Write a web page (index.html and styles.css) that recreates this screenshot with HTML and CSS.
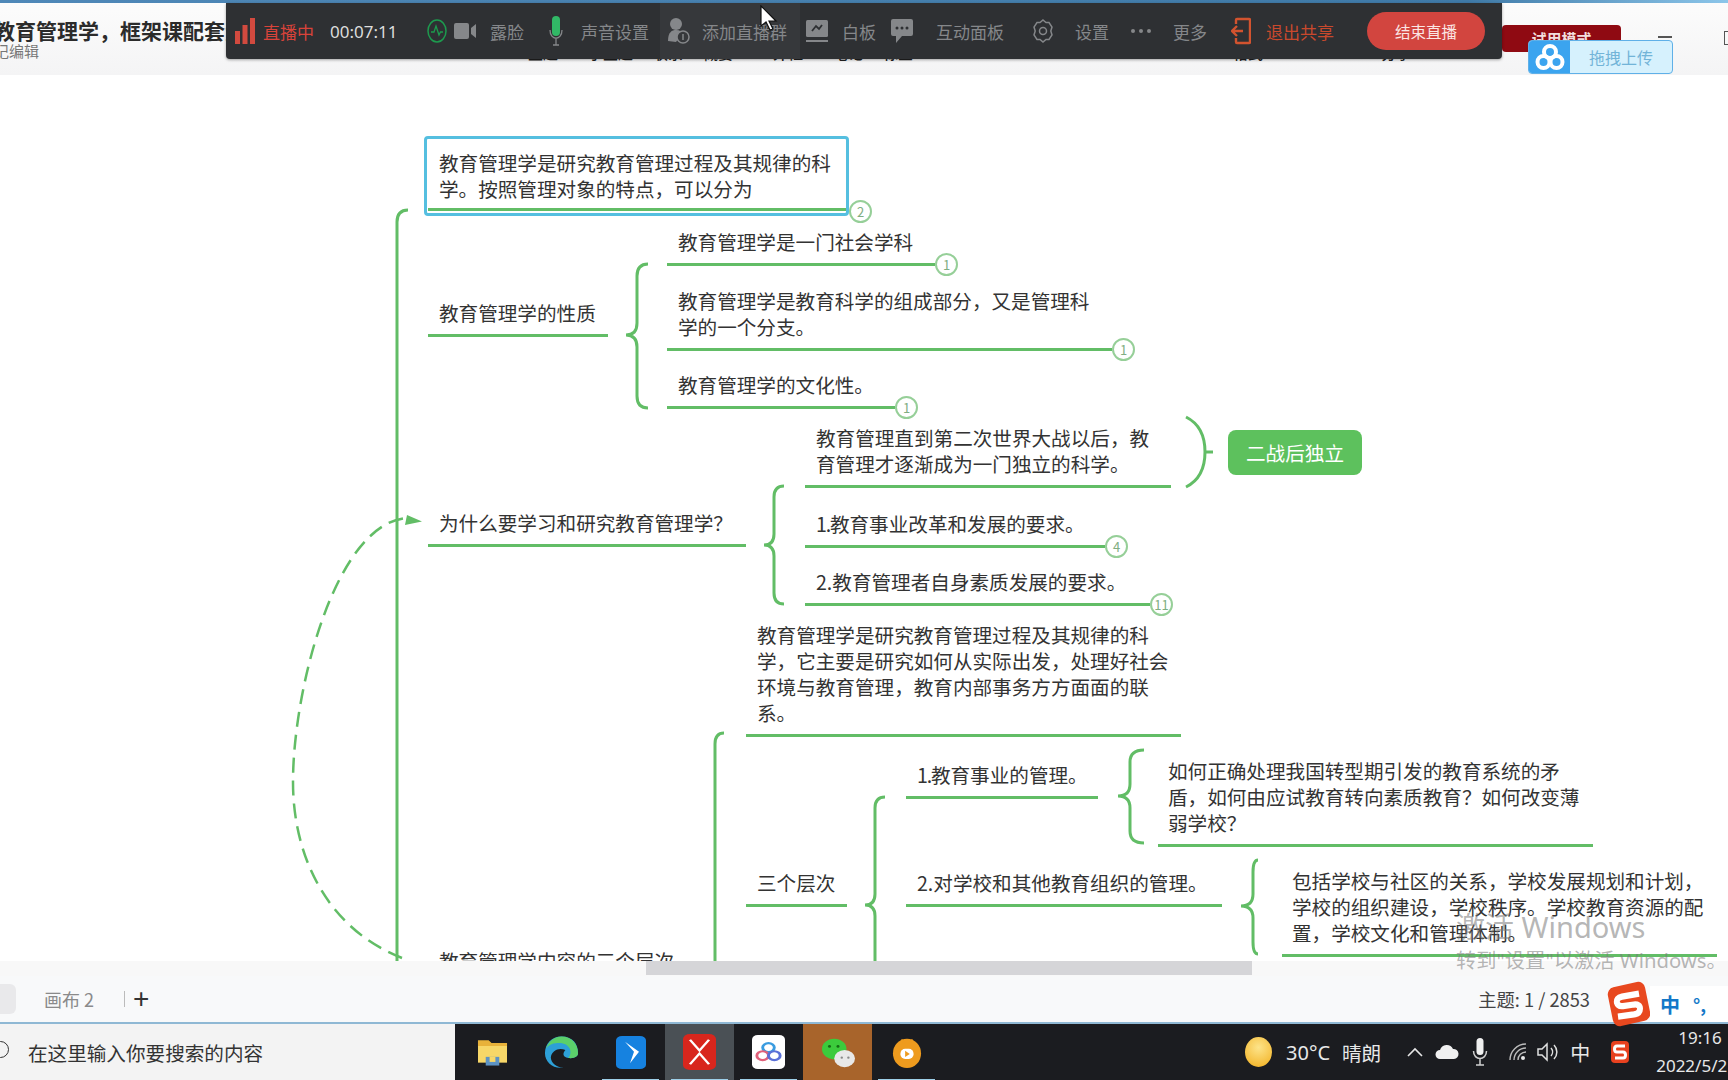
FILE: index.html
```html
<!DOCTYPE html>
<html lang="zh-CN">
<head>
<meta charset="utf-8">
<title>教育管理学</title>
<link rel="stylesheet" href="styles.css">
</head>
<body>
<div class="page">
  <header class="header">
    <div class="title-block">
      <div class="doc-title">教育管理学，框架课配套资料</div>
      <div class="doc-sub">记编辑</div>
    </div>
    <div class="menu-row">
      <span class="m1">主题</span><span class="m2">子主题</span><span class="m3">联系</span><span class="m4">概要</span><span class="m5">外框</span><span class="m6">笔记</span><span class="m7">标签</span><span class="m8">格式</span><span class="m9">分享</span>
    </div>
    <div class="trial">试用模式</div>
    <div class="win-min"></div>
    <div class="win-max"></div>
  </header>

  <main class="canvas">
    <svg class="links" viewBox="0 75 1728 886" width="1728" height="886" aria-hidden="true">
      <g class="link">
        <path d="M408 210Q397 210 397 222V961"/>
        <path d="M648 264Q637 264 637 276V323Q637 335 626 335Q637 335 637 347V396Q637 408 648 408"/>
        <path d="M784 486Q774 486 774 497V534Q774 545 764 545Q774 545 774 556V593Q774 604 784 604"/>
        <path d="M1186 417C1200 424 1205 438 1205 452C1205 466 1200 480 1186 487M1205 452H1213"/>
        <path d="M724 733Q715 733 715 744V961"/>
        <path d="M885 797Q875 797 875 808V894Q875 905 865 905Q875 905 875 916V961"/>
        <path d="M1144 750Q1130 750 1130 762V784Q1130 796 1118 796Q1130 796 1130 808V831Q1130 843 1144 843"/>
        <path d="M1258 860Q1253 860 1253 872V894Q1253 906 1241 906Q1253 906 1253 918V942Q1253 954 1258 954"/>
        <path class="dash" d="M402 958C330 930 293 860 293 782C293 690 335 525 406 518"/>
      </g>
      <path class="arrow" d="M407 515L422 521.500L405 525Z"/>
    </svg>

    <div class="selbox"></div>
    <div class="node a1">教育管理学是研究教育管理过程及其规律的科<br>学。按照管理对象的特点，可以分为<span class="badge">2</span></div>

    <div class="node b0">教育管理学的性质</div>
    <div class="node c1">教育管理学是一门社会学科<span class="badge">1</span></div>
    <div class="node c2">教育管理学是教育科学的组成部分，又是管理科<br>学的一个分支。<span class="badge">1</span></div>
    <div class="node c3">教育管理学的文化性。<span class="badge">1</span></div>

    <div class="node b1">为什么要学习和研究教育管理学？</div>
    <div class="node d1">教育管理直到第二次世界大战以后，教<br>育管理才逐渐成为一门独立的科学。</div>
    <div class="tag">二战后独立</div>
    <div class="node d2"><span class="one">1.</span>教育事业改革和发展的要求。<span class="badge">4</span></div>
    <div class="node d3">2.教育管理者自身素质发展的要求。<span class="badge">11</span></div>

    <div class="node b2">教育管理学内容的三个层次</div>
    <div class="node e1">教育管理学是研究教育管理过程及其规律的科<br>学，它主要是研究如何从实际出发，处理好社会<br>环境与教育管理，教育内部事务方方面面的联<br>系。</div>
    <div class="node e2">三个层次</div>
    <div class="node f1"><span class="one">1.</span>教育事业的管理。</div>
    <div class="node g1">如何正确处理我国转型期引发的教育系统的矛<br>盾，如何由应试教育转向素质教育？如何改变薄<br>弱学校？</div>
    <div class="node f2">2.对学校和其他教育组织的管理。</div>
    <div class="node g2">包括学校与社区的关系，学校发展规划和计划，<br>学校的组织建设，学校秩序。学校教育资源的配<br>置，学校文化和管理体制。</div>
  </main>

  <div class="hscroll"><div class="hthumb"></div></div>

  <footer class="statusbar">
    <div class="tab-active"></div>
    <div class="tab">画布 2</div>
    <div class="tab-sep"></div>
    <div class="tab-add">+</div>
    <div class="counter">主题: 1 / 2853</div>
  </footer>

  <div class="taskbar">
    <div class="search"><span class="search-ring"></span><span>在这里输入你要搜索的内容</span></div>
    <div class="tile"><svg width="31" height="29" viewBox="0 0 32 40" preserveAspectRatio="none"><path d="M1 3H12L15 7H31V12H1Z" fill="#e8b23a"/><path d="M1 11H31V34H1Z" fill="#f7d768"/><path d="M9 26H23V38H9Z" fill="#5d93c4"/><path d="M13 26H19V33H13Z" fill="#f7d768"/></svg></div>
    <div class="tile"><svg width="35" height="35" viewBox="0 0 36 44" preserveAspectRatio="none"><path d="M18 2C30 2 35 12 35 23C35 27 31 30 25 29C19 28 19 23 22 19C16 15 8 19 7 28C7 35 13 41 20 41C9 43 1 34 1 23C1 11 8 2 18 2Z" fill="#2da0d8"/><path d="M18 2C28 2 35 11 35 23C35 27 31 30 25 29C30 22 27 9 14 10C8 10 3 14 2 18C4 9 10 2 18 2Z" fill="#5bd06a"/></svg></div>
    <div class="tile tile-on"><svg width="30" height="33" viewBox="0 0 30 46" preserveAspectRatio="none"><rect width="30" height="46" rx="6" fill="#1682e0"/><path d="M9 8L23 22L14 38L18 22Z" fill="#fff"/></svg></div>
    <div class="tile tile-active tile-on"><svg width="33" height="36" viewBox="0 0 33 50" preserveAspectRatio="none"><rect width="33" height="50" rx="7" fill="#d8261d"/><path d="M7 8L16.500 23L26 8M7 42L16.500 27L26 42" fill="none" stroke="#fff" stroke-width="2.500"/></svg></div>
    <div class="tile tile-on"><svg width="33" height="34" viewBox="0 0 34 46" preserveAspectRatio="none"><rect width="34" height="46" rx="6" fill="#fff"/><circle cx="17" cy="17" r="6" fill="none" stroke="#3a9ce0" stroke-width="3"/><circle cx="11" cy="28" r="6" fill="none" stroke="#e0607a" stroke-width="3"/><circle cx="23" cy="28" r="6" fill="none" stroke="#5a70d8" stroke-width="3"/></svg></div>
    <div class="tile tile-wechat"><svg width="34" height="31" viewBox="0 0 36 36" preserveAspectRatio="none"><ellipse cx="14" cy="14" rx="13" ry="12" fill="#3ccb3c"/><ellipse cx="25" cy="25" rx="11" ry="10" fill="#e8e8e8"/><circle cx="9" cy="11" r="1.600" fill="#146c14"/><circle cx="18" cy="11" r="1.600" fill="#146c14"/><circle cx="22" cy="24" r="1.300" fill="#888"/><circle cx="29" cy="24" r="1.300" fill="#888"/></svg></div>
    <div class="tile tile-on"><svg width="30" height="33" viewBox="0 0 32 36" preserveAspectRatio="none"><ellipse cx="16" cy="19" rx="15" ry="16" fill="#ee9b1e"/><rect x="9" y="14" width="14" height="11" rx="5" fill="#fff"/><path d="M14 16L19 19.500L14 23Z" fill="#ee9b1e"/><path d="M10 4L14 8M22 4L18 8" stroke="#ee9b1e" stroke-width="2"/></svg></div>

    <div class="tray">
      <span class="sun"></span>
      <span class="temp">30°C</span>
      <span class="weather">晴朗</span>
      <svg class="t-caret" width="16" height="10" viewBox="0 0 16 10"><path d="M1 9L8 2L15 9" fill="none" stroke="#e6e6e6" stroke-width="1.600"/></svg>
      <svg class="t-cloud" width="24" height="16" viewBox="0 0 24 16"><path d="M5 15A4.500 4.500 0 0 1 5 6A7 7 0 0 1 18 5A5 5 0 0 1 19 15Z" fill="#f0f0f0"/></svg>
      <svg class="t-mic" width="16" height="30" viewBox="0 0 16 30"><rect x="4.500" y="1" width="7" height="17" rx="3.500" fill="#f0f0f0"/><path d="M1.500 14C1.500 24 14.500 24 14.500 14M8 22V28M4 28H12" fill="none" stroke="#d0d0d0" stroke-width="1.500"/></svg>
      <svg class="t-wifi" width="20" height="20" viewBox="0 0 20 20"><path d="M2 18A16 16 0 0 1 18 2M6 18A12 12 0 0 1 18 6M10 18A8 8 0 0 1 18 10" fill="none" stroke="#bcbcbc" stroke-width="1.400"/><circle cx="15" cy="16" r="2" fill="#e8e8e8"/></svg>
      <svg class="t-vol" width="24" height="22" viewBox="0 0 24 22"><path d="M2 8H6L11 3V19L6 14H2Z" fill="none" stroke="#e0e0e0" stroke-width="1.500"/><path d="M15 7A6 6 0 0 1 15 15M18 4A10 10 0 0 1 18 18" fill="none" stroke="#e0e0e0" stroke-width="1.500"/></svg>
      <span class="t-ime">中</span>
      <svg class="t-s" width="20" height="24" viewBox="0 0 20 24"><rect x="1" y="1" width="18" height="22" rx="4" fill="#e8411f"/><path d="M15 6H7Q4.500 6 4.500 9Q4.500 12 7 12H13Q15.500 12 15.500 15Q15.500 18 13 18H5" fill="none" stroke="#fff" stroke-width="3"/></svg>
      <div class="clock"><div class="clock-time">19:16</div><div class="clock-date">2022/5/2</div></div>
    </div>
  </div>

  <div class="top-stripe"></div>

  <div class="toolbar">
    <svg class="i-bars" width="20" height="26" viewBox="0 0 20 26"><rect x="0" y="13" width="5" height="13" fill="#d24a3f"/><rect x="7.500" y="7" width="5" height="19" fill="#d24a3f"/><rect x="15" y="0" width="5" height="26" fill="#d24a3f"/></svg>
    <span class="t-live">直播中</span>
    <span class="t-timer">00:07:11</span>
    <svg class="i-pulse" width="20" height="24" viewBox="0 0 20 24"><ellipse cx="10" cy="12" rx="9" ry="11" fill="none" stroke="#1d9a4e" stroke-width="1.500"/><path d="M4 13H7L9 7L12 16L13.500 13H16" fill="none" stroke="#1d9a4e" stroke-width="1.300"/></svg>
    <svg class="i-video" width="23" height="18" viewBox="0 0 23 18"><rect x="0" y="1" width="15" height="16" rx="2" fill="#85878a"/><path d="M17 6L22 2V16L17 12Z" fill="#85878a"/></svg>
    <span class="t-btn t-face">露脸</span>
    <svg class="i-mic" width="14" height="30" viewBox="0 0 14 30"><rect x="3" y="0" width="8" height="20" rx="4" fill="#31b866"/><path d="M1 14C1 25 13 25 13 14M7 23V29M4 29H10" fill="none" stroke="#85878a" stroke-width="1.300"/></svg>
    <span class="t-btn t-sound">声音设置</span>
    <div class="t-hover">
      <svg class="i-group" width="23" height="28" viewBox="0 0 23 28"><circle cx="9" cy="7" r="6" fill="#85878a"/><path d="M1 24C1 15 5 13 9 13C13 13 15 15 16 16L9 25Z" fill="#85878a"/><circle cx="16" cy="20" r="6" fill="#36383b" stroke="#85878a" stroke-width="1.500"/><path d="M16 17V23" stroke="#85878a" stroke-width="1.500"/></svg>
      <span class="t-btn t-add">添加直播群</span>
    </div>
    <svg class="i-board" width="22" height="24" viewBox="0 0 22 24"><rect x="0" y="1" width="22" height="17" rx="1.500" fill="#85878a"/><path d="M6 12L10 7L13 10L16 6" fill="none" stroke="#2e3033" stroke-width="1.800"/><rect x="0" y="21" width="22" height="2" fill="#85878a"/></svg>
    <span class="t-btn t-white">白板</span>
    <svg class="i-chat" width="22" height="26" viewBox="0 0 22 26"><path d="M2 1H20Q22 1 22 3V16Q22 18 20 18H11L5 25V18H2Q0 18 0 16V3Q0 1 2 1Z" fill="#85878a"/><circle cx="6" cy="10" r="1.500" fill="#2e3033"/><circle cx="11" cy="10" r="1.500" fill="#2e3033"/><circle cx="16" cy="10" r="1.500" fill="#2e3033"/></svg>
    <span class="t-btn t-panel">互动面板</span>
    <svg class="i-gear" width="22" height="24" viewBox="0 0 22 24"><path d="M11 1L14 3.500H17L20 8L18.800 12L20 16L17 20.500H14L11 23L8 20.500H5L2 16L3.200 12L2 8L5 3.500H8Z" fill="none" stroke="#85878a" stroke-width="1.500"/><circle cx="11" cy="12" r="3.500" fill="none" stroke="#85878a" stroke-width="1.500"/></svg>
    <span class="t-btn t-set">设置</span>
    <svg class="i-dots" width="22" height="6" viewBox="0 0 22 6"><circle cx="3" cy="3" r="2" fill="#85878a"/><circle cx="11" cy="3" r="2" fill="#85878a"/><circle cx="19" cy="3" r="2" fill="#85878a"/></svg>
    <span class="t-btn t-more">更多</span>
    <svg class="i-exit" width="20" height="28" viewBox="0 0 20 28"><path d="M5 7V3Q5 2 6 2H18Q19 2 19 3V25Q19 26 18 26H6Q5 26 5 25V21" fill="none" stroke="#d2532f" stroke-width="2.400"/><path d="M1 14H12M6 9L1 14L6 19" fill="none" stroke="#d2532f" stroke-width="2.400"/></svg>
    <span class="t-exit">退出共享</span>
    <div class="t-end">结束直播</div>
  </div>

  <svg class="cursor" width="18" height="26" viewBox="0 0 18 26"><path d="M1 1V21L6 17L10 25L13 24L9 16L16 16Z" fill="#fff" stroke="#111" stroke-width="1.200"/></svg>

  <div class="upload">
    <div class="upload-ico"><svg width="30" height="28" viewBox="0 0 30 28"><circle cx="15" cy="9" r="6" fill="none" stroke="#fff" stroke-width="4"/><circle cx="8.500" cy="19" r="6" fill="none" stroke="#fff" stroke-width="4"/><circle cx="21.500" cy="19" r="6" fill="none" stroke="#fff" stroke-width="4"/></svg></div>
    <div class="upload-txt">拖拽上传</div>
  </div>

  <div class="watermark">
    <div class="wm-1">激活 Windows</div>
    <div class="wm-2">转到"设置"以激活 Windows。</div>
  </div>

  <div class="ime">
    <svg class="ime-logo" width="46" height="48" viewBox="0 0 46 46" preserveAspectRatio="none"><rect x="4" y="4" width="38" height="38" rx="7" fill="#e8481f" transform="rotate(-12 23 23)"/><path d="M33 13L16 16Q10 17 11 22Q12 25.500 17 25L28 23.500Q34 23 34 27.500Q34 32 28 33L12 35" fill="none" stroke="#fff" stroke-width="6"/></svg>
    <div class="ime-bar"><span class="ime-zh">中</span><span class="ime-punc">°,</span></div>
  </div>
</div>
</body>
</html>
```
FILE: styles.css
```css
* { box-sizing: border-box; }
html, body { margin: 0; padding: 0; }
body {
  width: 1728px;
  height: 1080px;
  overflow: hidden;
  background: #fff;
  font-family: "Noto Sans CJK SC", "Noto Sans", sans-serif;
  color: #333;
}
.page {
  position: relative;
  display: flex;
  flex-direction: column;
  width: 1728px;
  height: 1080px;
  overflow: hidden;
}

/* header */
.header {
  position: relative;
  flex: 0 0 75px;
  background: linear-gradient(#fcfcfc, #f4f4f5);
  overflow: hidden;
}
.title-block { padding: 17px 0 0; margin-left: -6px; }
.doc-title { font-size: 21px; line-height: 26px; font-weight: 700; color: #2b2b2b; white-space: nowrap; width: 232px; overflow: hidden; }
.doc-sub { font-size: 15px; line-height: 18px; margin-top: -1px; color: #777; }
.menu-row {
  position: absolute;
  top: 44px;
  left: 0;
  display: flex;
  font-size: 15px;
  line-height: 18px;
  color: #222;
  font-weight: 500;
}
.m1 { margin-left: 528px; }
.m2 { margin-left: 30px; }
.m3 { margin-left: 20px; }
.m4 { margin-left: 20px; }
.m5 { margin-left: 40px; }
.m6 { margin-left: 30px; }
.m7 { margin-left: 20px; }
.m8 { margin-left: 320px; }
.m9 { margin-left: 118px; }
.trial {
  position: absolute;
  left: 1502px;
  top: 25px;
  width: 119px;
  height: 27px;
  border-radius: 4px;
  background: #8f0a12;
  color: #f2dede;
  font-size: 15px;
  line-height: 27px;
  font-weight: 700;
  text-align: center;
}
.win-min { position: absolute; left: 1658px; top: 36px; width: 14px; height: 2px; background: #555; }
.win-max { position: absolute; left: 1724px; top: 31px; width: 14px; height: 14px; border: 1.500px solid #555; }

/* canvas */
.canvas {
  position: relative;
  flex: 0 0 886px;
  background: #fff;
  overflow: hidden;
}
.links { position: absolute; left: 0; top: 0; }
.link path { fill: none; stroke: #62bd66; stroke-width: 3; }
.link .dash { stroke-width: 2.500; stroke-dasharray: 15 8; }
.arrow { fill: #62bd66; }

.node {
  position: absolute;
  padding: 0 0 8px 11px;
  border-bottom: 3px solid #62bd66;
  font-size: 19.600px;
  line-height: 26px;
  color: #333;
  white-space: nowrap;
}
.one { letter-spacing: -1.200px; }
.badge {
  position: absolute;
  right: -23px;
  bottom: -13px;
  width: 23px;
  height: 23px;
  border: 2px solid #96cf98;
  border-radius: 50%;
  background: #fff;
  color: #7fae82;
  font-size: 13px;
  line-height: 19px;
  text-align: center;
}
.selbox {
  position: absolute;
  left: 424px;
  top: 61px;
  width: 425px;
  height: 80px;
  border: 3px solid #55bfe0;
  border-radius: 4px;
}
.a1 { left: 428px; top: 75px; width: 418px; padding-bottom: 6px; }
.a1 .badge { bottom: -15px; right: -26px; }
.b0 { left: 428px; top: 225px; width: 180px; }
.c1 { left: 667px; top: 154px; width: 268px; }
.c2 { left: 667px; top: 213px; width: 445px; }
.c3 { left: 667px; top: 297px; width: 228px; }
.b1 { left: 428px; top: 435px; width: 318px; }
.d1 { left: 805px; top: 350px; width: 366px; }
.d2 { left: 805px; top: 436px; width: 300px; }
.d3 { left: 805px; top: 494px; width: 345px; }
.b2 { left: 428px; top: 873px; width: 300px; }
.e1 { left: 746px; top: 547px; width: 435px; }
.e2 { left: 746px; top: 795px; width: 101px; }
.f1 { left: 906px; top: 687px; width: 192px; }
.g1 { left: 1158px; top: 683px; width: 435px; padding-left: 10px; }
.f2 { left: 906px; top: 795px; width: 316px; }
.g2 { left: 1282px; top: 793px; width: 435px; padding-left: 10px; }
.tag {
  position: absolute;
  left: 1228px;
  top: 355px;
  width: 134px;
  height: 45px;
  border-radius: 8px;
  background: #5dc15d;
  color: #fff;
  font-size: 19.600px;
  line-height: 45px;
  text-align: center;
}

/* scrollbar */
.hscroll { flex: 0 0 15px; background: #f8f8f8; padding-left: 646px; }
.hthumb { width: 606px; height: 14px; background: #d5d5d8; }

/* status bar */
.statusbar {
  flex: 0 0 46px;
  display: flex;
  align-items: center;
  background: #f8f9fa;
}
.tab-active { width: 16px; height: 30px; background: #e9e9eb; border-radius: 0 6px 6px 0; }
.tab { margin-left: 28px; font-size: 18px; color: #8a8a8a; width: 52px; white-space: nowrap; }
.tab-sep { margin-left: 28px; width: 1px; height: 16px; background: #bbb; }
.tab-add { margin-left: 8px; font-size: 28px; line-height: 30px; color: #333; font-family: "Liberation Sans", sans-serif; }
.counter { margin-left: auto; margin-right: 138px; font-size: 18.300px; color: #444; white-space: nowrap; }

/* taskbar */
.taskbar {
  flex: 0 0 58px;
  display: flex;
  align-items: stretch;
  background: #1b1c20;
  border-top: 2px solid #8fb8d4;
  border-bottom: 2px solid #0c0c0e;
}
.search {
  flex: 0 0 455px;
  margin-right: 3px;
  display: flex;
  align-items: center;
  gap: 19px;
  background: #f3f3f3;
  color: #333;
  font-size: 19.600px;
  white-space: nowrap;
}
.search-ring { width: 17px; height: 17px; margin-left: -8px; border: 1.500px solid #333; border-radius: 50%; margin-bottom: 6px; }
.tile {
  position: relative;
  flex: 0 0 69px;
  display: flex;
  align-items: center;
  justify-content: center;
}
.tile-on::after {
  content: "";
  position: absolute;
  left: 6px;
  right: 6px;
  bottom: -1px;
  height: 2px;
  background: #9ecfe8;
}
.tile-active { background: #4a5055; }
.tile-wechat { background: #a8642b; }
.tray {
  flex: 1 1 auto;
  display: flex;
  align-items: center;
  color: #e8e8e8;
  font-size: 19.600px;
  white-space: nowrap;
}
.sun {
  width: 27px;
  height: 30px;
  margin-left: 304px;
  border-radius: 50%;
  background: radial-gradient(circle at 50% 35%, #fde48a, #f2ae1c);
}
.temp { margin-left: 14px; font-family: "Noto Sans", sans-serif; font-size: 20px; width: 50px; }
.weather { margin-left: 6px; font-size: 19.600px; }
.t-caret { margin-left: 26px; }
.t-cloud { margin-left: 12px; }
.t-mic { margin-left: 13px; }
.t-wifi { margin-left: 20px; }
.t-vol { margin-left: 8px; }
.t-ime { margin-left: 10px; font-size: 20px; }
.t-s { margin-left: 20px; }
.clock { margin-left: 26px; width: 80px; font-family: "Noto Sans", sans-serif; font-size: 17px; line-height: 28px; }
.clock-time { padding-left: 22px; }

/* top stripe */
.top-stripe {
  position: absolute;
  left: 0;
  top: 0;
  width: 1728px;
  height: 3px;
  background: linear-gradient(90deg, #4f88b8 0, #3f7aa8 85%, #8cc6ea 100%);
}

/* live toolbar */
.toolbar {
  position: absolute;
  left: 226px;
  top: 3px;
  width: 1276px;
  height: 56px;
  padding-left: 9px;
  display: flex;
  align-items: center;
  background: #2e3033;
  border-radius: 0 0 4px 4px;
  box-shadow: 0 1px 3px rgba(0, 0, 0, .35);
  font-size: 17px;
  white-space: nowrap;
}
.t-btn { color: #85878a; }
.t-live { margin-left: 8px; color: #d9433a; }
.t-timer { margin-left: 16px; color: #ddd; font-family: "Noto Sans", sans-serif; font-size: 17px; width: 66px; }
.i-pulse { margin-left: 31px; }
.i-video { margin-left: 7px; }
.t-face { margin-left: 13px; }
.i-mic { margin-left: 25px; }
.t-sound { margin-left: 18px; }
.t-hover {
  align-self: stretch;
  display: flex;
  align-items: center;
  margin-left: 11px;
  padding: 0 13px 0 7px;
  background: #36383b;
}
.t-add { margin-left: 12px; }
.i-board { margin-left: 6px; }
.t-white { margin-left: 14px; }
.i-chat { margin-left: 15px; }
.t-panel { margin-left: 23px; }
.i-gear { margin-left: 28px; }
.t-set { margin-left: 21px; }
.i-dots { margin-left: 21px; }
.t-more { margin-left: 21px; }
.i-exit { margin-left: 24px; }
.t-exit { margin-left: 15px; color: #c9492d; }
.t-end {
  margin-left: 33px;
  width: 118px;
  height: 38px;
  border-radius: 19px;
  background: #d2453f;
  color: #fbe6e4;
  font-size: 15.500px;
  line-height: 38px;
  text-align: center;
}
.cursor { position: absolute; left: 760px; top: 5px; }

/* upload widget */
.upload {
  position: absolute;
  left: 1528px;
  top: 40px;
  width: 145px;
  height: 34px;
  display: flex;
  border: 1px solid #5fb0e8;
  border-radius: 4px;
  overflow: hidden;
  background: #d6f1fd;
}
.upload-ico {
  flex: 0 0 41px;
  display: flex;
  align-items: center;
  justify-content: center;
  background: #3ba4ef;
}
.upload-txt { flex: 1; text-align: center; font-size: 16px; line-height: 32px; color: #72b4d8; }

/* activation watermark */
.watermark {
  position: absolute;
  left: 1456px;
  top: 908px;
  width: 290px;
  color: rgba(120, 120, 120, .55);
  white-space: nowrap;
}
.wm-1 { font-size: 29px; line-height: 38px; font-family: "Noto Sans", "Noto Sans CJK SC", sans-serif; }
.wm-2 { font-size: 20.300px; line-height: 28px; font-family: "Noto Sans", "Noto Sans CJK SC", sans-serif; }

/* IME bar */
.ime { position: absolute; left: 1606px; top: 980px; display: flex; align-items: center; }
.ime-logo { flex: 0 0 46px; }
.ime-bar {
  width: 80px;
  height: 36px;
  background: #fff;
  padding-left: 10px;
  margin-left: -2px;
  display: flex;
  align-items: center;
  gap: 13px;
  color: #1478c8;
  font-weight: 700;
  font-size: 20px;
}
.ime-punc { font-size: 18px; }
```
